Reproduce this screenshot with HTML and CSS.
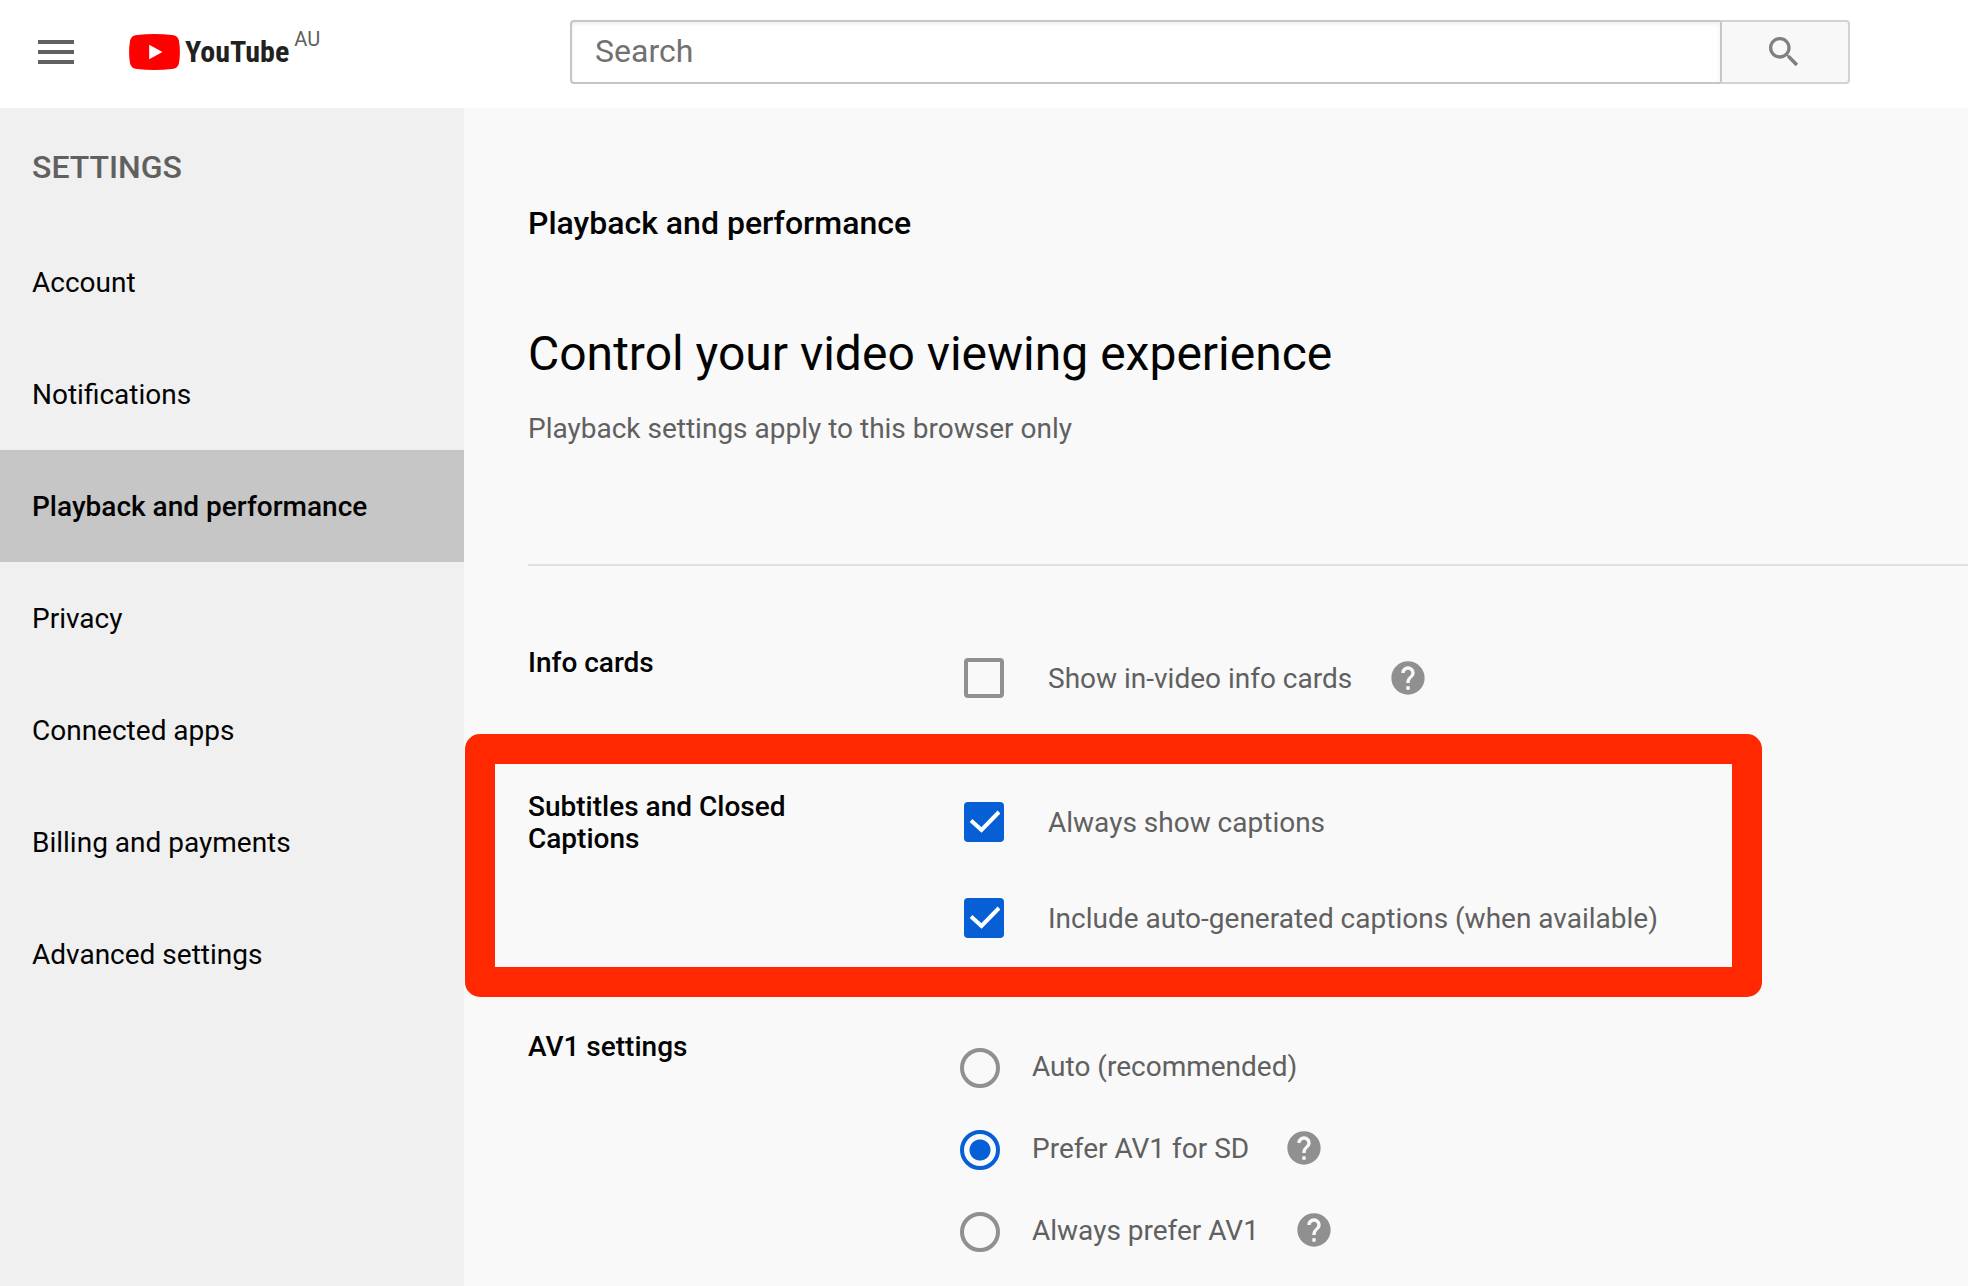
FILE: index.html
```html
<!DOCTYPE html>
<html lang="en-AU">
<head>
<meta charset="utf-8">
<meta name="viewport" content="width=device-width, initial-scale=1">
<title>Playback and performance - YouTube</title>
<link rel="stylesheet" href="styles.css">
</head>
<body>
<svg class="sprite" aria-hidden="true">
  <symbol id="icon-help" viewBox="0 0 24 24"><path d="M12 2C6.48 2 2 6.48 2 12s4.480 10 10 10 10-4.480 10-10S17.520 2 12 2zm1 17h-2v-2h2v2zm2.070-7.750l-.9.920C13.450 12.900 13 13.500 13 15h-2v-.5c0-1.100.450-2.100 1.170-2.830l1.240-1.260c.370-.360.590-.860.590-1.410 0-1.100-.9-2-2-2s-2 .9-2 2H8c0-2.210 1.790-4 4-4s4 1.790 4 4c0 .880-.360 1.680-.930 2.250z"/></symbol>
</svg>

<header class="masthead">
  <div class="masthead-start">
    <button class="icon-button" type="button" aria-label="Guide">
      <svg class="menu-icon" viewBox="0 0 24 24"><path d="M3 18h18v-2H3v2zm0-5h18v-2H3v2zm0-7v2h18V6H3z"/></svg>
    </button>
    <a class="logo" href="#" aria-label="YouTube Home">
      <svg class="logo-mark" viewBox="0 0 51 36">
        <path fill="#f00" d="M8 .9Q25.500-.9 43 .9Q49.200 1.500 50 7Q51.800 18 50 29Q49.200 34.500 43 35.100Q25.500 36.900 8 35.100Q1.800 34.500 1 29Q-.8 18 1 7Q1.800 1.500 8 .9z"/>
        <path fill="#fff" d="M20.200 10.800v14.500L33.500 18z"/>
      </svg>
      <span class="logo-word">YouTube</span>
      <span class="logo-country">AU</span>
    </a>
  </div>
  <form class="search" role="search">
    <input class="search-input" type="text" placeholder="Search" aria-label="Search">
    <button class="search-button" type="button" aria-label="Search">
      <svg class="search-icon" viewBox="0 0 24 24"><path d="M15.500 14h-.790l-.280-.270C15.410 12.590 16 11.110 16 9.500 16 5.910 13.090 3 9.500 3S3 5.910 3 9.500 5.910 16 9.500 16c1.610 0 3.090-.590 4.230-1.570l.270.280v.790l5 4.990L20.490 19l-4.990-5zm-6 0C7.010 14 5 11.990 5 9.500S7.010 5 9.500 5 14 7.010 14 9.500 11.990 14 9.500 14z"/></svg>
    </button>
  </form>
</header>

<div class="page">
  <nav class="sidebar" aria-label="Settings">
    <h2 class="sidebar-title">SETTINGS</h2>
    <a class="sidebar-link" href="#">Account</a>
    <a class="sidebar-link" href="#">Notifications</a>
    <a class="sidebar-link is-active" href="#" aria-current="page">Playback and performance</a>
    <a class="sidebar-link" href="#">Privacy</a>
    <a class="sidebar-link" href="#">Connected apps</a>
    <a class="sidebar-link" href="#">Billing and payments</a>
    <a class="sidebar-link" href="#">Advanced settings</a>
  </nav>

  <main class="content">
    <div class="intro">
      <h1 class="page-title">Playback and performance</h1>
      <p class="headline">Control your video viewing experience</p>
      <p class="subline">Playback settings apply to this browser only</p>
    </div>

    <div class="options">
      <section class="option">
        <h3 class="option-title">Info cards</h3>
        <div class="checks">
          <div class="check-row">
            <input class="checkbox" type="checkbox" id="info-cards">
            <label class="check-label" for="info-cards">Show in-video info cards</label>
            <button class="icon-button" type="button" aria-label="Help"><svg class="help-icon"><use href="#icon-help"/></svg></button>
          </div>
        </div>
      </section>

      <section class="option is-highlighted">
        <h3 class="option-title">Subtitles and Closed Captions</h3>
        <div class="checks">
          <div class="check-row">
            <input class="checkbox" type="checkbox" id="captions" checked>
            <label class="check-label" for="captions">Always show captions</label>
          </div>
          <div class="check-row">
            <input class="checkbox" type="checkbox" id="auto-captions" checked>
            <label class="check-label" for="auto-captions">Include auto-generated captions (when available)</label>
          </div>
        </div>
      </section>

      <section class="option">
        <h3 class="option-title">AV1 settings</h3>
        <div class="radios">
          <div class="radio-row">
            <input class="radio" type="radio" name="av1" id="av1-auto">
            <label class="radio-label" for="av1-auto">Auto (recommended)</label>
          </div>
          <div class="radio-row">
            <input class="radio" type="radio" name="av1" id="av1-sd" checked>
            <label class="radio-label" for="av1-sd">Prefer AV1 for SD</label>
            <button class="icon-button" type="button" aria-label="Help"><svg class="help-icon"><use href="#icon-help"/></svg></button>
          </div>
          <div class="radio-row">
            <input class="radio" type="radio" name="av1" id="av1-always">
            <label class="radio-label" for="av1-always">Always prefer AV1</label>
            <button class="icon-button" type="button" aria-label="Help"><svg class="help-icon"><use href="#icon-help"/></svg></button>
          </div>
        </div>
      </section>
    </div>
  </main>
</div>
</body>
</html>
```
FILE: styles.css
```css
* {
  box-sizing: border-box;
}

body {
  display: flex;
  flex-direction: column;
  min-height: 100vh;
  margin: 0;
  background: #f9f9f9;
  color: #030303;
  font: 400 28px/32px Roboto, "Liberation Sans", sans-serif;
}

h1, h2, h3, p {
  margin: 0;
}

a {
  color: inherit;
  text-decoration: none;
}

svg {
  display: block;
}

.sprite {
  display: none;
}

.icon-button {
  padding: 0;
  border: 0;
  background: none;
  cursor: pointer;
}

/* Masthead */
.masthead {
  display: flex;
  align-items: flex-start;
  height: 108px;
  padding: 20px 118px 0 32px;
  background: #fff;
}

.masthead-start {
  display: flex;
  flex: 0 0 538px;
  align-items: center;
  height: 64px;
}

.menu-icon {
  width: 48px;
  height: 48px;
  fill: #606060;
}

.logo {
  display: flex;
  align-items: center;
  margin-left: 49px;
}

.logo-mark {
  width: 51px;
  height: 36px;
}

.logo-word {
  margin-left: 5px;
  color: #212121;
  font: 700 30px/42px "Roboto Condensed", "Liberation Sans Narrow", Roboto, sans-serif;
}

.logo-country {
  align-self: flex-start;
  margin-left: 5px;
  color: #606060;
  font-size: 20px;
  line-height: 16px;
}

.search {
  display: flex;
  flex: 1;
  height: 64px;
}

.search-input {
  flex: 1;
  min-width: 0;
  padding: 0 23px 2px;
  border: 2px solid #c6c6c6;
  border-right: 0;
  border-radius: 4px 0 0 4px;
  background: #fff;
  box-shadow: inset 0 2px 4px #eee;
  color: #030303;
  font: 400 32px/40px Roboto, sans-serif;
}

.search-input::placeholder {
  color: #717171;
  opacity: 1;
}

.search-button {
  display: flex;
  flex: 0 0 130px;
  align-items: center;
  justify-content: center;
  padding: 0 2px 0 0;
  border: 2px solid #d3d3d3;
  border-left-color: #c6c6c6;
  border-radius: 0 4px 4px 0;
  background: #f8f8f8;
}

.search-icon {
  width: 40px;
  height: 40px;
  fill: #808080;
}

/* Settings page */
.page {
  display: flex;
  flex: 1;
}

.sidebar {
  flex: 0 0 464px;
  background: #f0f0f0;
}

.sidebar-title {
  padding: 39px 32px;
  color: #606060;
  font-size: 32px;
  font-weight: 500;
  line-height: 40px;
}

.sidebar-link {
  display: block;
  padding: 41px 32px 39px;
}

.sidebar-link.is-active {
  background: #c6c6c6;
  font-weight: 500;
}

.content {
  flex: 1;
  min-width: 0;
  padding-left: 64px;
}

.intro {
  padding: 95px 0 119px;
  border-bottom: 2px solid #e1e1e1;
}

.page-title {
  font-size: 32px;
  font-weight: 500;
  line-height: 40px;
}

.headline {
  margin-top: 83px;
  font-size: 48px;
  line-height: 56px;
}

.subline {
  margin-top: 31px;
  color: #606060;
}

.options {
  display: flex;
  flex-direction: column;
  gap: 48px;
  padding-top: 64px;
}

.option {
  display: grid;
  grid-template-columns: 300px 1fr;
  column-gap: 132px;
  position: relative;
  color: #606060;
}

/* Red frame drawn around the captions options */
.is-highlighted::after {
  content: "";
  position: absolute;
  inset: -40px 206px -31px -63px;
  border: 30px solid #ff2800;
  border-radius: 15px;
  pointer-events: none;
}

.option-title {
  padding-top: 17px;
  color: #030303;
  font-size: 28px;
  font-weight: 500;
}

.checks {
  padding-left: 4px;
}

.check-row {
  display: flex;
  align-items: center;
  height: 96px;
}

.check-label {
  margin: 0 36px 0 44px;
  padding-top: 2px;
}

.checkbox,
.radio {
  flex: none;
  appearance: none;
  width: 40px;
  height: 40px;
  margin: 0;
  border: 4px solid #909090;
}

.checkbox {
  border-radius: 4px;
}

.checkbox:checked {
  border-color: #065fd4;
  background: #065fd4 url("data:image/svg+xml,%3Csvg xmlns='http://www.w3.org/2000/svg' viewBox='0 0 40 40'%3E%3Cpath d='M7 18.500L17.500 28 35 10' fill='none' stroke='%23fff' stroke-width='4'/%3E%3C/svg%3E") center / 40px 40px no-repeat border-box;
}

.radios {
  padding-top: 13px;
}

.radio-row {
  display: flex;
  align-items: center;
  height: 82px;
}

.radio {
  border-radius: 50%;
}

.radio:checked {
  border-color: #065fd4;
  background: radial-gradient(circle, #065fd4 10px, transparent 11px);
}

.radio-label {
  margin: 0 35px 0 32px;
  padding-bottom: 2px;
}

.radio-row .icon-button {
  padding-bottom: 4px;
}

.help-icon {
  width: 40px;
  height: 40px;
  fill: #909090;
}
```
